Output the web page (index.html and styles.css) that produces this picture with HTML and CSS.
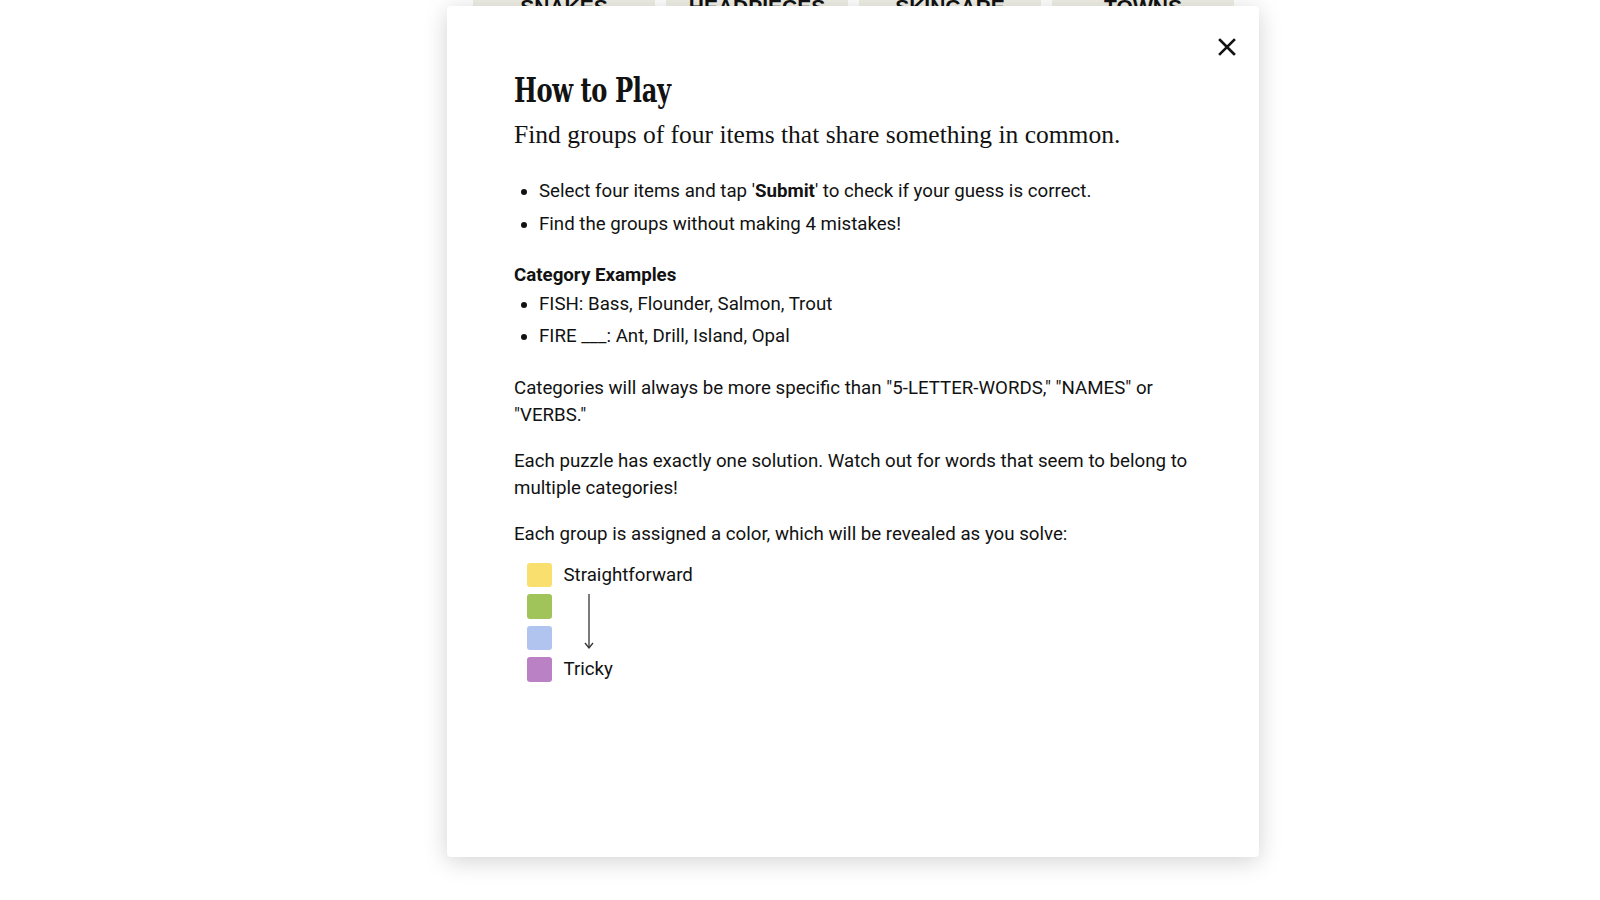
FILE: index.html
```html
<!DOCTYPE html>
<html lang="en">
<head>
<meta charset="utf-8">
<title>How to Play</title>
<link rel="stylesheet" href="styles.css">
</head>
<body>
<div class="page">
  <div class="board">
    <div class="tile">SNAKES</div>
    <div class="tile">HEADPIECES</div>
    <div class="tile">SKINCARE</div>
    <div class="tile">TOWNS</div>
  </div>

  <div class="modal" role="dialog" aria-labelledby="htp-title">
    <button class="close" aria-label="Close">
      <svg width="18" height="18" viewBox="0 0 18 18"><path d="M2 2 L16 16 M16 2 L2 16" stroke="#121212" stroke-width="2.6" stroke-linecap="square" fill="none"/></svg>
    </button>
    <h1 id="htp-title" class="title"><span>How to Play</span></h1>
    <p class="subtitle">Find groups of four items that share something in common.</p>
    <ul class="list first">
      <li>Select four items and tap '<strong>Submit</strong>' to check if your guess is correct.</li>
      <li>Find the groups without making 4 mistakes!</li>
    </ul>
    <h2 class="section">Category Examples</h2>
    <ul class="list examples">
      <li>FISH: Bass, Flounder, Salmon, Trout</li>
      <li>FIRE ___: Ant, Drill, Island, Opal</li>
    </ul>
    <p class="para">Categories will always be more specific than "5-LETTER-WORDS," "NAMES" or "VERBS."</p>
    <p class="para">Each puzzle has exactly one solution. Watch out for words that seem to belong to multiple categories!</p>
    <p class="para">Each group is assigned a color, which will be revealed as you solve:</p>
    <div class="legend">
      <span class="sq yellow"></span><span class="lbl top">Straightforward</span>
      <span class="sq green"></span>
      <span class="arrow">
        <svg width="12" height="56" viewBox="0 0 12 56"><path d="M6 0 V54" stroke="#333" stroke-width="1.3" fill="none"/><path d="M2 49 L6 54 L10 49" stroke="#333" stroke-width="1.3" fill="none"/></svg>
      </span>
      <span class="sq blue"></span>
      <span class="sq purple"></span><span class="lbl bottom">Tricky</span>
    </div>
  </div>
</div>
</body>
</html>
```

FILE: styles.css
```css
html, body {
  margin: 0;
  padding: 0;
  background: #ffffff;
}

.page {
  position: relative;
  width: 1600px;
  height: 900px;
  overflow: hidden;
  font-family: "Liberation Sans Narrow", Roboto, "Liberation Sans", sans-serif;
  color: #121212;
}

.board {
  display: grid;
  grid-template-columns: repeat(4, 182px);
  column-gap: 11px;
  margin-left: 473px;
  margin-top: -33px;
}

.tile {
  height: 80px;
  background: #efefe6;
  border-radius: 6px;
  display: flex;
  align-items: center;
  justify-content: center;
  font-family: "Liberation Sans", Arial, sans-serif;
  font-weight: 700;
  font-size: 21px;
  color: #121212;
  text-transform: uppercase;
}

.modal {
  position: absolute;
  left: 447px;
  top: 6px;
  width: 812px;
  height: 851px;
  box-sizing: border-box;
  padding: 0 68px 0 67px;
  background: #ffffff;
  border-radius: 4px;
  box-shadow: 0 4px 23px rgba(0, 0, 0, 0.18);
}

.close {
  position: absolute;
  top: 26px;
  right: 17px;
  width: 30px;
  height: 30px;
  padding: 0;
  border: 0;
  background: transparent;
  display: flex;
  align-items: center;
  justify-content: center;
}

.title {
  margin: 64px 0 0;
  font-family: "DejaVu Serif Condensed", "DejaVu Serif", serif;
  font-weight: 700;
  font-size: 34px;
  line-height: 40px;
  color: #121212;
}

.title span {
  display: inline-block;
  transform: scaleX(0.79);
  transform-origin: left center;
  letter-spacing: -0.5px;
}

.subtitle {
  margin: 10px 0 0;
  font-family: "Liberation Serif", "Times New Roman", serif;
  font-size: 25.5px;
  line-height: 30px;
  color: #121212;
}

.list {
  margin: 0;
  padding-left: 25px;
  font-size: 18.7px;
  line-height: 26.6px;
}

.list li {
  margin-bottom: 6px;
}

.list.first {
  margin-top: 28px;
}

.list.examples {
  margin-top: 2px;
}

.section {
  margin: 25px 0 0;
  font-size: 18.7px;
  line-height: 26.6px;
  font-weight: 700;
}

.para {
  margin: 20px 0 0;
  font-size: 18.7px;
  line-height: 26.6px;
}

.list + .para {
  margin-top: 25px;
}

.legend {
  display: grid;
  grid-template-columns: 24.5px auto;
  grid-auto-rows: 24.5px;
  column-gap: 12px;
  row-gap: 7px;
  margin: 15px 0 0 13px;
  font-size: 18.7px;
  line-height: 24.5px;
}

.sq {
  grid-column: 1;
  width: 24.5px;
  height: 24.5px;
  border-radius: 3px;
}

.lbl {
  grid-column: 2;
}

.lbl.top { grid-row: 1; }
.lbl.bottom { grid-row: 4; }

.arrow {
  grid-column: 2;
  grid-row: 2 / span 2;
  padding-left: 19px;
  display: flex;
  align-items: center;
}

.yellow { background: #f9df6d; grid-row: 1; }
.green { background: #a0c35a; grid-row: 2; }
.blue { background: #b0c4ef; grid-row: 3; }
.purple { background: #ba81c5; grid-row: 4; }
```
